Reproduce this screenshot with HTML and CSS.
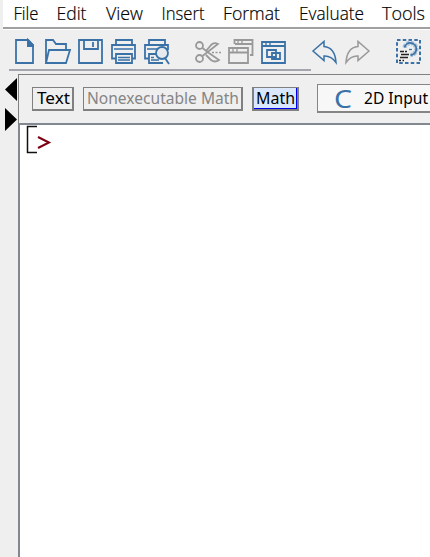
FILE: index.html
```html
<!DOCTYPE html>
<html lang="en">
<head>
<meta charset="utf-8">
<title>Worksheet</title>
<link rel="stylesheet" href="styles.css">
</head>
<body>
<nav class="menu">
<svg width="43" height="27"><text x="0.5" y="20" textLength="25" lengthAdjust="spacingAndGlyphs">File</text></svg>
<svg width="49" height="27"><text x="0.5" y="20" textLength="30" lengthAdjust="spacingAndGlyphs">Edit</text></svg>
<svg width="56" height="27"><text x="1" y="20" textLength="37" lengthAdjust="spacingAndGlyphs">View</text></svg>
<svg width="62" height="27"><text x="0.5" y="20" textLength="43" lengthAdjust="spacingAndGlyphs">Insert</text></svg>
<svg width="76" height="27"><text x="0" y="20" textLength="57" lengthAdjust="spacingAndGlyphs">Format</text></svg>
<svg width="82" height="27"><text x="0" y="20" textLength="65" lengthAdjust="spacingAndGlyphs">Evaluate</text></svg>
<svg width="48" height="27"><text x="1" y="20" textLength="43" lengthAdjust="spacingAndGlyphs">Tools</text></svg>
</nav>
<div class="toolbar">
<svg class="icon new" viewBox="0 0 26 26"><path d="M1 2h12l5 5v18H1zM13 2v6h5"/><path class="solid" d="M13 2l5 5v1h-5z"/></svg>
<svg class="icon open" viewBox="0 0 26 26"><path d="M1 25V2h7l3 4h10v6M1 25L4 12h21l-4 13z"/></svg>
<svg class="icon save" viewBox="0 0 26 26"><path d="M1 2h23v23H1zM6 2v9h14V2M15 4v5"/></svg>
<svg class="icon print" viewBox="0 0 26 26"><path d="M5 6V2h16v4M5 20.500H1V7h23v13.500h-3M5 16h16v9H5z"/><path class="thin" d="M7 19.500h12M7 22h12M3 11h19"/></svg>
<svg class="icon preview" viewBox="0 0 26 26"><path d="M5 6V2h16v4M5 20.500H1V7h23v5M12 16H5v9h14"/><path class="thin" d="M7 19.500h3M7 22h8M3 11h10"/><circle class="lens" cx="18" cy="15" r="6"/><path d="M21 20l4 6"/></svg>
<svg class="icon cut gray" viewBox="0 0 26 26"><circle cx="4.500" cy="7.500" r="3.500"/><circle cx="4.500" cy="20.500" r="3.500"/><path d="M7.500 10l5 4L24 22q-4 3-8 0l-5-5M7.500 18L23 6q-4-2-7 1l-5 6"/><path class="dots" d="M17 14.500h9"/></svg>
<svg class="icon windows gray" viewBox="0 0 26 26"><path d="M6.500 6V2h18v15H22M7 6h17M1 10h19v15H1zM1 14.500h19"/><path class="thin" d="M5 10v4M9 10v4M10 2v4M14 2v4"/></svg>
<svg class="icon linked" viewBox="0 0 26 26"><path d="M1 4h23v21H1zM1 8h23M6 12h9v7H6zM11 15h8v6h-8z"/><path class="thin" d="M5 4v4M9 4v4"/></svg>
<svg class="icon undo" viewBox="0 0 26 26"><path d="M1 13L12 3.500v5q11 1 12 16-5-7-12-6.500v4.500z"/></svg>
<svg class="icon redo gray" viewBox="0 0 26 26"><path d="M24 13L13 3.500v5q-11 1-12 16 5-7 12-6.500v4.500z"/></svg>
<svg class="icon select" viewBox="0 0 26 26"><rect class="dash" x="1" y="2" width="23" height="23"/><path class="halo" d="M8.500 9.500a6 6 0 1 1 6 7.500"/><path class="gear" d="M8.500 9.500a6 6 0 1 1 6 7.500"/><path class="thin" d="M13 11.500h3"/><path class="black" d="M4 13.500h4M9 13.500h2M5 16.500h8M4 19.500h8"/><path class="black dots" d="M3 22.500h5"/></svg>
</div>
<div class="rule"></div>
<main>
<aside><svg width="18" height="60"><path d="M5 12.500L17 1v23zM5 31l12 11.500L5 54z"/></svg></aside>
<section>
<div class="modes">
<div class="tab text"><svg width="39" height="20"><text x="4" y="16" textLength="33" lengthAdjust="spacingAndGlyphs">Text</text></svg></div>
<div class="tab non"><svg width="157" height="20"><text x="3" y="16" textLength="152" lengthAdjust="spacingAndGlyphs">Nonexecutable Math</text></svg></div>
<div class="tab math"><svg width="43" height="20"><text x="2" y="16" textLength="39" lengthAdjust="spacingAndGlyphs">Math</text></svg></div>
<div class="style"><svg width="120" height="26"><text class="c" x="16" y="22.500" textLength="18" lengthAdjust="spacingAndGlyphs">C</text><text x="46" y="19" textLength="64" lengthAdjust="spacingAndGlyphs">2D Input</text></svg></div>
</div>
<div class="sheet"><svg width="34" height="30"><path class="bracket" d="M17 1.500H7.500v26H17"/><path class="prompt" d="M18 12l11 5.500L18 23"/></svg></div>
</section>
</main>
</body>
</html>
```

FILE: styles.css
```css
* { box-sizing: border-box; }
html, body { margin: 0; height: 100%; overflow: hidden; background: #efefef; }
body { display: flex; flex-direction: column; font-family: "Noto Sans", sans-serif; }
svg { display: block; flex: none; overflow: visible; }
text { fill: #000; }
.menu { height: 30px; flex: none; display: flex; margin-left: 3px; padding-left: 10px; background: #fff; border-bottom: 1px solid #fff; box-shadow: inset 0 -2px #a0a0a0; font-family: "Open Sans", sans-serif; font-size: 18px; font-weight: 300; }
.menu text { stroke: #000; stroke-width: .2; }
.toolbar { height: 39px; flex: none; display: flex; padding: 8px 0 0 15px; }
.icon { width: 26px; height: 26px; fill: none; stroke: #3a72a8; stroke-width: 1.8; }
.solid { fill: #3a72a8; }
.gray { stroke: #999; }
.new { margin-right: 4px; }
.open { margin-right: 7px; }
.save { margin-right: 7px; }
.print { margin-right: 7px; }
.preview { margin-right: 25px; }
.cut { margin-right: 7px; }
.windows { margin-right: 7px; }
.linked { margin-right: 25px; }
.undo { margin-right: 7px; }
.redo { margin-right: 25px; }
.undo, .redo { stroke-width: 1.5; }
.thin { stroke-width: 1.3; }
.lens { fill: #e6eaee; }
.dots { stroke-dasharray: 2 1.5; stroke-width: 1.5; }
.dash { stroke-dasharray: 3.5 2.250; stroke-width: 2; }
.halo { stroke: #a9c1d8; stroke-width: 4.5; stroke-dasharray: 3 1; }
.gear { stroke-width: 1.8; }
.black { stroke: #222; stroke-width: 1.5; }
.rule { width: 302px; height: 2px; flex: none; margin-left: 9px; background: #a5a5ad; }
main { flex: 1; display: flex; padding-top: 3px; min-height: 0; }
aside { width: 18px; flex: none; padding-top: 3px; }
section { flex: 1; min-width: 0; display: flex; flex-direction: column; }
.modes { height: 51px; flex: none; display: flex; align-items: center; padding-left: 13px; border: solid #808080; border-width: 1px 0 2px 1px; border-bottom-color: #828790; overflow: hidden; }
.tab { height: 24px; flex: none; margin-top: -1px; border: 1px solid #808080; border-right-width: 2px; border-bottom-width: 2px; font-size: 16px; }
.text { width: 42px; margin-right: 9px; }
.non { width: 160px; margin-right: 9px; }
.non text { fill: #858585; }
.math { width: 47px; margin-right: 18px; border-left-width: 2px; background: #d9e8ff; box-shadow: inset -1px -1px #0000e8; }
.style { height: 29px; width: 122px; flex: none; margin-top: -2px; border: 1px solid #858585; border-bottom-width: 2px; background: #f7f7f7; font-size: 16px; }
.style .c { fill: #3a72a8; font-size: 26px; }
.sheet { flex: 1; background: #fff; border-left: 2px solid #828790; }
.bracket { fill: none; stroke: #111; stroke-width: 1.5; }
.prompt { fill: none; stroke: #7c0010; stroke-width: 2; }
```
